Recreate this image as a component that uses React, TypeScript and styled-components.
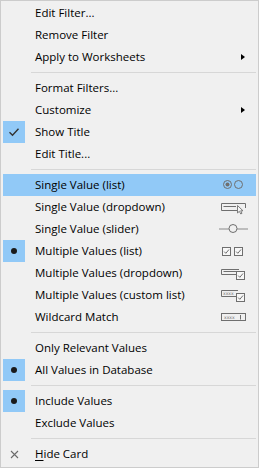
import React from 'react';
import styled, { createGlobalStyle, css } from 'styled-components';

const GlobalStyle = createGlobalStyle`
  html, body {
    margin: 0;
    padding: 0;
    background: #f0f0f0;
  }
  * {
    box-sizing: border-box;
  }
`;

const THEME = {
  BG: '#f0f0f0',
  BORDER: '#cccccc',
  SEPARATOR: '#d7d7d7',
  HIGHLIGHT: '#91c9f7',
  TEXT: '#000000',
  ICON: '#6f6f6f',
};

const Menu = styled.div`
  width: 259px;
  height: 468px;
  padding: 1px 2px 2px 2px;
  border: 1px solid ${THEME.BORDER};
  background: ${THEME.BG};
  display: flex;
  flex-direction: column;
  font-family: 'Open Sans', 'Noto Sans', sans-serif;
  font-size: 11.5px;
  color: ${THEME.TEXT};
`;

interface ItemProps {
  active?: boolean;
}

const Item = styled.div<ItemProps>`
  height: 22px;
  flex-shrink: 0;
  display: grid;
  grid-template-columns: 22px 1fr auto;
  align-items: center;
  ${(props) =>
    props.active &&
    css`
      background: ${THEME.HIGHLIGHT};
    `};
`;

interface GutterProps {
  checked?: boolean;
}

const Gutter = styled.div<GutterProps>`
  width: 22px;
  height: 22px;
  display: flex;
  align-items: center;
  justify-content: center;
  background: ${(props) => (props.checked ? THEME.HIGHLIGHT : 'transparent')};
`;

const Label = styled.span`
  padding-left: 10px;
  white-space: nowrap;
  line-height: 22px;
  u {
    text-decoration-thickness: 1px;
    text-underline-offset: 2px;
  }
`;

const RightSlot = styled.div`
  height: 22px;
  padding-right: 8px;
  display: flex;
  align-items: center;
  justify-content: flex-end;
`;

const SubArrow = styled.div`
  width: 0;
  height: 0;
  margin-right: 3px;
  border-top: 3.5px solid transparent;
  border-bottom: 3.5px solid transparent;
  border-left: 4px solid #000;
`;

const Bullet = styled.div`
  width: 6px;
  height: 6px;
  border-radius: 50%;
  background: #1a1a1a;
`;

const Separator = styled.div`
  height: 9px;
  flex-shrink: 0;
  display: flex;
  align-items: center;
  padding-left: 28px;
  &::after {
    content: '';
    display: block;
    width: 100%;
    height: 1px;
    background: ${THEME.SEPARATOR};
  }
`;

const IconSvg = styled.svg`
  display: block;
  width: 30px;
  height: 14px;
  overflow: visible;
`;

const Tiny = styled.text`
  font-family: 'DejaVu Sans', sans-serif;
  font-size: 4.5px;
  fill: ${THEME.ICON};
`;

const CheckMark = () => (
  <svg width="12" height="10" viewBox="0 0 12 10">
    <path d="M1.5 5.2 L4.5 8.2 L10.5 1.8" fill="none" stroke="#333" strokeWidth="1.4" />
  </svg>
);

const CloseMark = () => (
  <svg width="9" height="9" viewBox="0 0 9 9">
    <path d="M1 1 L8 8 M8 1 L1 8" stroke="#6a6a6a" strokeWidth="1.1" />
  </svg>
);

const SmallBox = ({ x, y }: { x: number; y: number }) => (
  <g>
    <rect x={x + 0.5} y={y + 0.5} width={8} height={8} fill="#f7f7f7" stroke={THEME.ICON} />
    <path
      d={`M${x + 2.2} ${y + 4.6} L${x + 3.8} ${y + 6.3} L${x + 7} ${y + 2.5}`}
      fill="none"
      stroke={THEME.ICON}
      strokeWidth="1"
    />
  </g>
);

const RadioIcon = () => (
  <IconSvg viewBox="0 0 30 14">
    <circle cx="9.5" cy="6.5" r="4" fill="none" stroke={THEME.ICON} />
    <circle cx="9.5" cy="6.5" r="2" fill={THEME.ICON} />
    <circle cx="20.5" cy="6.5" r="4" fill="none" stroke={THEME.ICON} />
  </IconSvg>
);

const DropdownIcon = () => (
  <IconSvg viewBox="0 0 30 14">
    <path d="M3.5 3.5 H27.5 V8 M3.5 3.5 V10.5 H19" fill="none" stroke={THEME.ICON} />
    <path d="M5.5 6.5 H18" stroke={THEME.ICON} />
    <path
      d="M19.5 5.5 V13 L21.3 11.3 L22.8 14 L24 13.3 L22.7 10.8 L25 10.8 Z"
      fill="#f7f7f7"
      stroke={THEME.ICON}
      strokeWidth="0.9"
      strokeLinejoin="round"
    />
  </IconSvg>
);

const SliderIcon = () => (
  <IconSvg viewBox="0 0 30 14">
    <path d="M1 7 H30" stroke="#bdbdbd" strokeWidth="2" />
    <circle cx="15" cy="6.5" r="4" fill="#f0f0f0" stroke={THEME.ICON} />
  </IconSvg>
);

const MultiListIcon = () => (
  <IconSvg viewBox="0 0 30 14">
    <SmallBox x={4} y={3} />
    <SmallBox x={16} y={3} />
  </IconSvg>
);

const MultiDropdownIcon = () => (
  <IconSvg viewBox="0 0 30 14">
    <path d="M3.5 3.5 H21 M3.5 3.5 V8.5 H18" fill="none" stroke={THEME.ICON} />
    <path d="M5.5 5.5 H18" stroke={THEME.ICON} />
    <SmallBox x={18} y={5} />
  </IconSvg>
);

const CustomListIcon = () => (
  <IconSvg viewBox="0 0 30 14">
    <path d="M3.5 2.5 H20 M3.5 2.5 V8.5 H18" fill="none" stroke={THEME.ICON} />
    <Tiny x="5" y="7.3">xxxx</Tiny>
    <SmallBox x={18} y={5} />
  </IconSvg>
);

const WildcardIcon = () => (
  <IconSvg viewBox="0 0 30 14">
    <rect x="3.5" y="3.5" width="24" height="7" fill="none" stroke={THEME.ICON} />
    <Tiny x="6" y="8.5">xxxx</Tiny>
    <path d="M22.5 5 V9.5" stroke={THEME.ICON} />
  </IconSvg>
);

type Row =
  | { kind: 'sep' }
  | {
      kind: 'item';
      label: React.ReactNode;
      mark?: 'check' | 'bullet' | 'close';
      active?: boolean;
      right?: React.ReactNode;
    };

const rows: Row[] = [
  { kind: 'item', label: 'Edit Filter...' },
  { kind: 'item', label: 'Remove Filter' },
  { kind: 'item', label: 'Apply to Worksheets', right: <SubArrow /> },
  { kind: 'sep' },
  { kind: 'item', label: 'Format Filters...' },
  { kind: 'item', label: 'Customize', right: <SubArrow /> },
  { kind: 'item', label: 'Show Title', mark: 'check' },
  { kind: 'item', label: 'Edit Title...' },
  { kind: 'sep' },
  { kind: 'item', label: 'Single Value (list)', active: true, right: <RadioIcon /> },
  { kind: 'item', label: 'Single Value (dropdown)', right: <DropdownIcon /> },
  { kind: 'item', label: 'Single Value (slider)', right: <SliderIcon /> },
  { kind: 'item', label: 'Multiple Values (list)', mark: 'bullet', right: <MultiListIcon /> },
  { kind: 'item', label: 'Multiple Values (dropdown)', right: <MultiDropdownIcon /> },
  { kind: 'item', label: 'Multiple Values (custom list)', right: <CustomListIcon /> },
  { kind: 'item', label: 'Wildcard Match', right: <WildcardIcon /> },
  { kind: 'sep' },
  { kind: 'item', label: 'Only Relevant Values' },
  { kind: 'item', label: 'All Values in Database', mark: 'bullet' },
  { kind: 'sep' },
  { kind: 'item', label: 'Include Values', mark: 'bullet' },
  { kind: 'item', label: 'Exclude Values' },
  { kind: 'sep' },
  {
    kind: 'item',
    label: (
      <>
        <u>H</u>ide Card
      </>
    ),
    mark: 'close',
  },
];

export default function App() {
  return (
    <>
      <GlobalStyle />
      <Menu>
        {rows.map((row, i) => {
          if (row.kind === 'sep') return <Separator key={i} />;
          return (
            <Item key={i} active={row.active}>
              <Gutter checked={row.mark === 'check' || row.mark === 'bullet'}>
                {row.mark === 'check' && <CheckMark />}
                {row.mark === 'bullet' && <Bullet />}
                {row.mark === 'close' && <CloseMark />}
              </Gutter>
              <Label>{row.label}</Label>
              <RightSlot>{row.right}</RightSlot>
            </Item>
          );
        })}
      </Menu>
    </>
  );
}
